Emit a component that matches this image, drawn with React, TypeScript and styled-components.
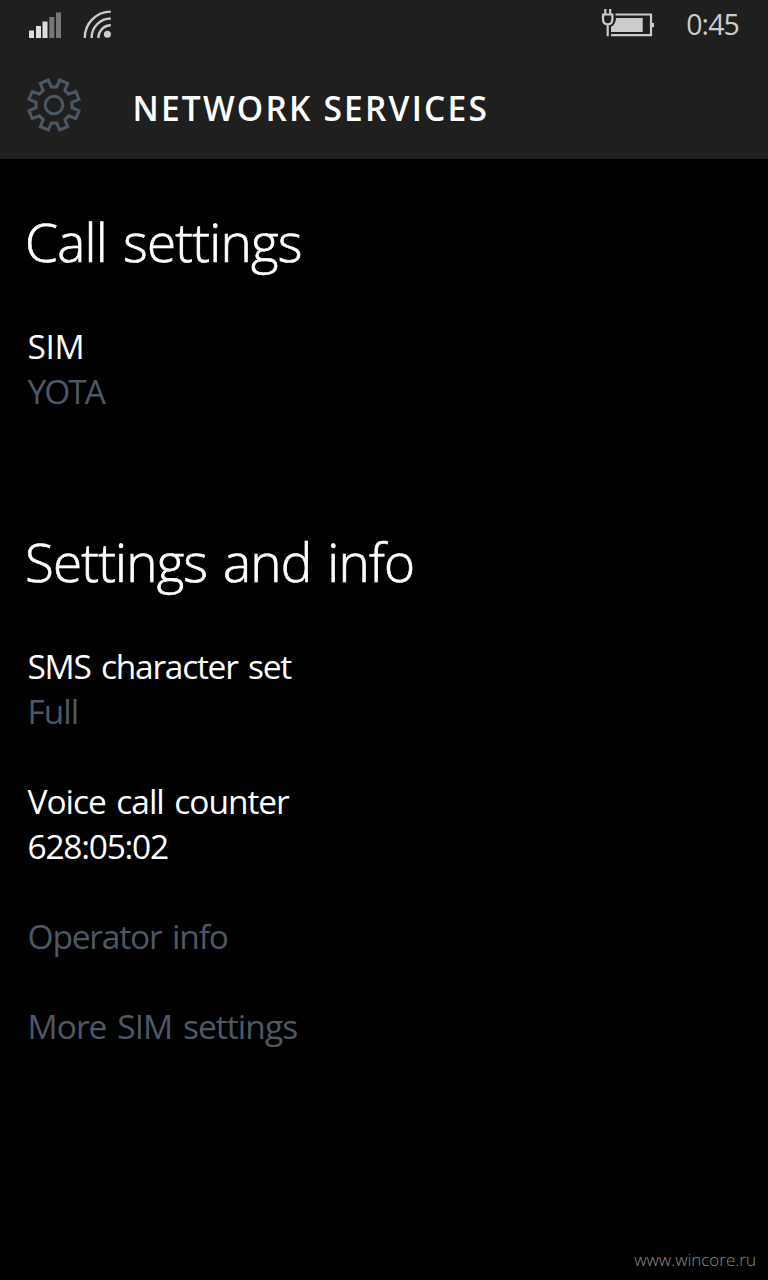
import React from "react";
import styled, { createGlobalStyle } from "styled-components";

const GlobalStyle = createGlobalStyle`
  body { margin: 0; background: #000; }
  * { box-sizing: border-box; }
`;

const Screen = styled.div`
  display: flex;
  flex-direction: column;
  width: 768px;
  height: 1280px;
  background: #000;
  color: #fff;
  font-family: "Open Sans", "Noto Sans", sans-serif;
  overflow: hidden;
`;

const StatusBar = styled.div`
  display: flex;
  align-items: center;
  justify-content: space-between;
  height: 50px;
  padding: 0 29px 0 28px;
  background: #1f1f1f;
`;

const StatusGroup = styled.div<{ $gap: number }>`
  display: flex;
  align-items: center;
  gap: ${(p) => p.$gap}px;
`;

const Clock = styled.span`
  color: #ccc;
  font-size: 28.5px;
  line-height: 48px;
  letter-spacing: -0.9px;
  padding-bottom: 2px;
  white-space: nowrap;
`;

const Header = styled.header`
  display: flex;
  align-items: flex-start;
  gap: 48.5px;
  height: 109px;
  padding: 25px 24px 0;
  background: #1f1f1f;
`;

const GearIcon = styled.svg`
  display: block;
  flex: none;
`;

const Title = styled.h1`
  margin: 10px 0 0;
  font-size: 33.5px;
  font-weight: 600;
  line-height: 46px;
  letter-spacing: 2.2px;
  white-space: nowrap;
`;

const Content = styled.main`
  display: flex;
  flex-direction: column;
  flex: 1;
  padding: 47px 24px 0;
`;

const Section = styled.section`
  display: flex;
  flex-direction: column;
  height: 320px;
`;

const Heading = styled.h2<{ $spacing: number }>`
  margin: 0 0 46px;
  padding-left: 1px;
  font-size: 53px;
  font-weight: 300;
  line-height: 72px;
  letter-spacing: ${(p) => p.$spacing}px;
  word-spacing: 3px;
  -webkit-text-stroke: 0.7px currentColor;
  white-space: nowrap;
`;

const Setting = styled.div`
  margin: 0 0 45px 3.5px;
`;

const Line = styled.div<{ $muted?: boolean; $spacing: number }>`
  width: max-content;
  font-size: 33.5px;
  line-height: 45px;
  color: ${(p) => (p.$muted ? "#4c5866" : "#fff")};
  letter-spacing: ${(p) => p.$spacing}px;
  word-spacing: 3px;
  white-space: nowrap;
`;

const Footer = styled.footer`
  display: flex;
  justify-content: flex-end;
  height: 40px;
  padding: 8px 12px 0 0;
  color: #8a8a8a;
  font-size: 17px;
  font-weight: 300;
  line-height: 24px;
`;

const gearPoints = Array.from({ length: 8 }, (_, i) => {
  const a = (i * Math.PI) / 4;
  const b = a + Math.PI / 4;
  const turn = (x: number, y: number, t: number) =>
    `${(30 + x * Math.cos(t) - y * Math.sin(t)).toFixed(2)},${(30 + x * Math.sin(t) + y * Math.cos(t)).toFixed(2)}`;
  return [turn(-2.7, -18, a), turn(2.7, -18, a), turn(5.7, -25, a), turn(-5.7, -25, b)].join(" ");
}).join(" ");

const Gear = () => (
  <GearIcon width="60" height="60" viewBox="0 0 60 60" fill="none" stroke="#4c5866" strokeWidth="3">
    <polygon points={gearPoints} />
    <circle cx="30" cy="30" r="8.8" />
  </GearIcon>
);

const Signal = () => (
  <svg width="34" height="50" viewBox="28 0 34 50" fill="#ddd">
    <rect x="29" y="30.5" width="5" height="7.5" />
    <rect x="36" y="26" width="5" height="12" />
    <rect x="42.5" y="21.5" width="5" height="16.5" />
    <g fill="#777">
      <rect x="49.3" y="17" width="5" height="21" />
      <rect x="56" y="12.5" width="5" height="25.5" />
    </g>
  </svg>
);

const Wifi = () => (
  <svg width="30" height="50" viewBox="82 0 30 50" fill="none" stroke="#ccc" strokeWidth="2.4">
    <path d="M84.8 38A26 26 0 0 1 110.8 11.6" />
    <path d="M91.6 38A19.2 19.2 0 0 1 110.8 18.5" />
    <path d="M98.4 38A12.6 12.6 0 0 1 110.8 25.3" />
    <circle cx="107.4" cy="34.2" r="3.5" fill="#ccc" stroke="none" />
  </svg>
);

const Battery = () => (
  <svg width="54" height="50" viewBox="601 0 54 50" fill="none" stroke="#ccc" strokeWidth="2.2">
    <path d="M615.5 14.5H651V35.2H611" />
    <path d="M651.5 23H654V27.2H651.5Z" fill="#ccc" stroke="none" />
    <path d="M616 18H642.7V32H611V26.8Q615.8 24.5 616 18Z" fill="#ccc" stroke="none" />
    <path d="M605.3 9V14M610.2 9V14M602 14.5H613.4M603 14.5V19Q603 24.3 607.7 24.3Q612.4 24.3 612.4 19V14.5M607.7 24V36.3" />
  </svg>
);

export default function App() {
  return (
    <Screen>
      <GlobalStyle />
      <StatusBar>
        <StatusGroup $gap={20}>
          <Signal />
          <Wifi />
        </StatusGroup>
        <StatusGroup $gap={31.5}>
          <Battery />
          <Clock>0:45</Clock>
        </StatusGroup>
      </StatusBar>
      <Header>
        <Gear />
        <Title>NETWORK SERVICES</Title>
      </Header>
      <Content>
        <Section>
          <Heading $spacing={-0.75}>Call settings</Heading>
          <Setting>
            <Line $spacing={-0.4}>SIM</Line>
            <Line $muted $spacing={-2}>YOTA</Line>
          </Setting>
        </Section>
        <Section>
          <Heading $spacing={-0.85}>Settings and info</Heading>
          <Setting>
            <Line $spacing={-1.27}>SMS character set</Line>
            <Line $muted $spacing={-1}>Full</Line>
          </Setting>
          <Setting>
            <Line $spacing={-1.05}>Voice call counter</Line>
            <Line $spacing={-1.25}>628:05:02</Line>
          </Setting>
          <Setting>
            <Line $muted $spacing={-1.18}>Operator info</Line>
          </Setting>
          <Setting>
            <Line $muted $spacing={-0.95}>More SIM settings</Line>
          </Setting>
        </Section>
      </Content>
      <Footer>www.wincore.ru</Footer>
    </Screen>
  );
}
